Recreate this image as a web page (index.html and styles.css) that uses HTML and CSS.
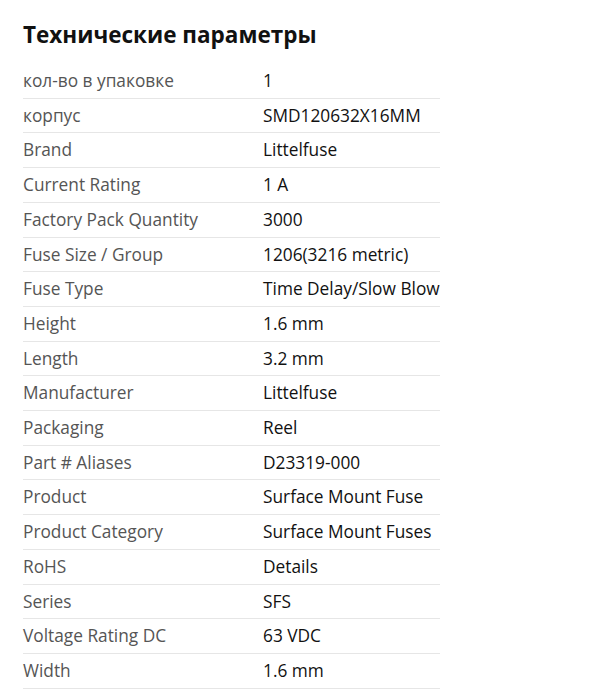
FILE: index.html
```html
<!DOCTYPE html>
<html lang="ru">
<head>
<meta charset="utf-8">
<link rel="stylesheet" href="styles.css">
</head>
<body>
<section class="specs">
  <h2 class="specs__title">Технические параметры</h2>
  <table class="specs__table">
    <colgroup><col class="col-k"><col class="col-v"></colgroup>
    <tbody>
      <tr><td class="k">кол-во в упаковке</td><td class="v">1</td></tr>
      <tr><td class="k">корпус</td><td class="v">SMD120632X16MM</td></tr>
      <tr><td class="k">Brand</td><td class="v">Littelfuse</td></tr>
      <tr><td class="k">Current Rating</td><td class="v">1 A</td></tr>
      <tr><td class="k">Factory Pack Quantity</td><td class="v">3000</td></tr>
      <tr><td class="k">Fuse Size / Group</td><td class="v">1206(3216 metric)</td></tr>
      <tr><td class="k">Fuse Type</td><td class="v">Time Delay/Slow Blow</td></tr>
      <tr><td class="k">Height</td><td class="v">1.6 mm</td></tr>
      <tr><td class="k">Length</td><td class="v">3.2 mm</td></tr>
      <tr><td class="k">Manufacturer</td><td class="v">Littelfuse</td></tr>
      <tr><td class="k">Packaging</td><td class="v">Reel</td></tr>
      <tr><td class="k">Part # Aliases</td><td class="v">D23319-000</td></tr>
      <tr><td class="k">Product</td><td class="v">Surface Mount Fuse</td></tr>
      <tr><td class="k">Product Category</td><td class="v">Surface Mount Fuses</td></tr>
      <tr><td class="k">RoHS</td><td class="v">Details</td></tr>
      <tr><td class="k">Series</td><td class="v">SFS</td></tr>
      <tr><td class="k">Voltage Rating DC</td><td class="v">63 VDC</td></tr>
      <tr><td class="k">Width</td><td class="v">1.6 mm</td></tr>
    </tbody>
  </table>
</section>
</body>
</html>
```
FILE: styles.css
```css
html, body {
  margin: 0;
  padding: 0;
  background: #fff;
}
body {
  font-family: "Open Sans", "Liberation Sans", sans-serif;
}
.specs {
  padding: 20px 23px 0;
}
.specs__title {
  margin: 0 0 14px;
  font-size: 22.5px;
  font-weight: 700;
  line-height: 30px;
  color: #111;
}
.specs__table {
  width: 417px;
  border-collapse: collapse;
  table-layout: fixed;
}
.col-k {
  width: 240px;
}
.col-v {
  width: 177px;
}
.specs__table td {
  padding: 5px 0;
  height: 23.7px;
  line-height: 23.7px;
  font-size: 17.3px;
  border-bottom: 1px solid #e6e6e6;
  white-space: nowrap;
  overflow: visible;
  vertical-align: middle;
}
.k {
  color: #555;
}
.v {
  color: #111;
}
```
